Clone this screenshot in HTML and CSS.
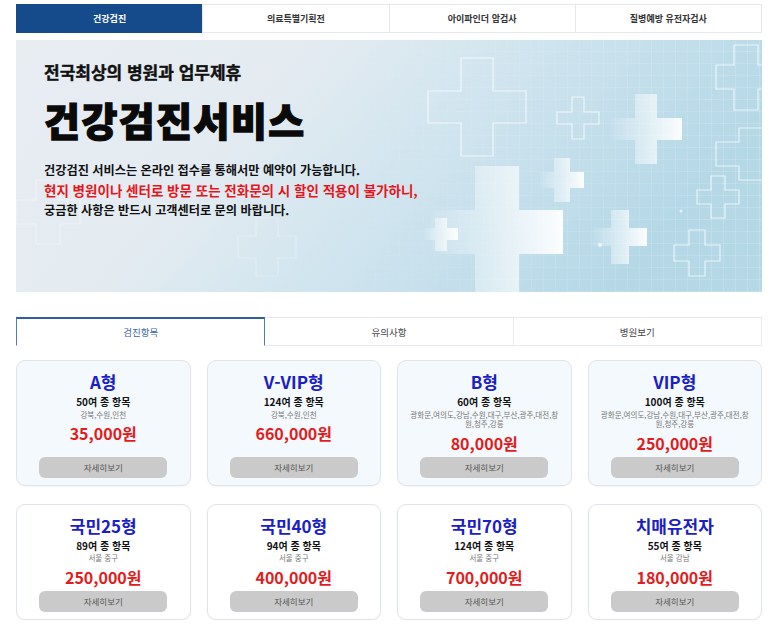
FILE: index.html
```html
<!DOCTYPE html>
<html lang="ko">
<head>
<meta charset="utf-8">
<title>건강검진서비스</title>
<link rel="stylesheet" href="styles.css">
</head>
<body>
<div class="page">
  <nav class="top-tabs">
    <a class="top-tab active">건강검진</a>
    <a class="top-tab">의료특별기획전</a>
    <a class="top-tab">아이파인더 암검사</a>
    <a class="top-tab">질병예방 유전자검사</a>
  </nav>

  <section class="hero">
    <svg class="hero-bg" width="746" height="252" viewBox="0 0 746 252" xmlns="http://www.w3.org/2000/svg" aria-hidden="true">
      <defs>
        <linearGradient id="base" x1="0" y1="0" x2="1" y2="0.3">
          <stop offset="0" stop-color="#e8edf2"/>
          <stop offset="0.38" stop-color="#e3ebf1"/>
          <stop offset="0.62" stop-color="#d1e5ef"/>
          <stop offset="1" stop-color="#b5d8e7"/>
        </linearGradient>
        <linearGradient id="fade" x1="0" y1="0" x2="1" y2="0">
          <stop offset="0" stop-color="#ffffff" stop-opacity="0.05"/>
          <stop offset="1" stop-color="#ffffff" stop-opacity="0.95"/>
        </linearGradient>
        <linearGradient id="gridmask" x1="0" y1="0" x2="1" y2="0">
          <stop offset="0.3" stop-color="#fff" stop-opacity="0"/>
          <stop offset="1" stop-color="#fff" stop-opacity="1"/>
        </linearGradient>
        <mask id="gm"><rect width="746" height="252" fill="url(#gridmask)"/></mask>
        <pattern id="grid" width="12" height="12" patternUnits="userSpaceOnUse">
          <path d="M12 0V12M0 12H12" stroke="#ffffff" stroke-opacity="0.3" stroke-width="1" fill="none"/>
        </pattern>
      </defs>
      <rect width="746" height="252" fill="url(#base)"/>
      <rect width="746" height="252" fill="url(#grid)" mask="url(#gm)"/>
      <g fill="none" stroke="#ffffff" stroke-opacity="0.7" stroke-width="1.2">
        <path d="M445 18H477V51H510V83H477V116H445V83H412V51H445Z"/>
        <path d="M556 57H568V72H583V84H568V99H556V84H541V72H556Z"/>
        <path d="M718 5H742V25H760V49H742V70H718V49H700V25H718Z"/>
        <path d="M723 88H747V102H770V126H747V140H723V126H700V102H723Z"/>
        <path d="M695 136H709V150H723V164H709V178H695V164H681V150H695Z"/>
        <path d="M673 190H689V205H704V221H689V236H673V221H658V205H673Z"/>
        <path d="M20 140H44V160H64V184H44V204H20V184H0V160H20Z" stroke-opacity="0.35"/>
        <path d="M240 178H262V196H280V218H262V236H240V218H222V196H240Z" stroke-opacity="0.3"/>
      </g>
      <g fill="url(#fade)">
        <path d="M459 126H503V170H547V214H503V258H459V214H415V170H459Z"/>
        <path d="M619 54H641V78H666V100H641V124H619V100H595V78H619Z"/>
        <path d="M538 118H554V132H568V148H554V162H538V148H524V132H538Z"/>
        <path d="M595 170H613V188H631V206H613V224H595V206H577V188H595Z"/>
        <path d="M419 178H431V188H442V200H431V211H419V200H408V188H419Z"/>
      </g>
      <circle cx="158" cy="78" r="2" fill="#fff" fill-opacity="0.7"/>
      <circle cx="584" cy="205" r="2" fill="#fff" fill-opacity="0.7"/>
      <circle cx="665" cy="171" r="1.5" fill="#fff" fill-opacity="0.7"/>
    </svg>
    <div class="hero-text">
      <p class="hero-kicker">전국최상의 병원과 업무제휴</p>
      <h1 class="hero-title">건강검진서비스</h1>
      <p class="hero-line">건강검진 서비스는 온라인 접수를 통해서만 예약이 가능합니다.</p>
      <p class="hero-line red">현지 병원이나 센터로 방문 또는 전화문의 시 할인 적용이 불가하니,</p>
      <p class="hero-line">궁금한 사항은 반드시 고객센터로 문의 바랍니다.</p>
    </div>
  </section>

  <nav class="sub-tabs">
    <a class="sub-tab active">검진항목</a>
    <a class="sub-tab">유의사항</a>
    <a class="sub-tab">병원보기</a>
  </nav>

  <div class="cards">
    <div class="card tinted">
      <h2 class="card-title">A형</h2>
      <p class="card-items">50여 종 항목</p>
      <p class="card-loc">강북,수원,인천</p>
      <p class="card-price">35,000원</p>
      <a class="card-btn">자세히보기</a>
    </div>
    <div class="card tinted">
      <h2 class="card-title">V-VIP형</h2>
      <p class="card-items">124여 종 항목</p>
      <p class="card-loc">강북,수원,인천</p>
      <p class="card-price">660,000원</p>
      <a class="card-btn">자세히보기</a>
    </div>
    <div class="card tinted">
      <h2 class="card-title">B형</h2>
      <p class="card-items">60여 종 항목</p>
      <p class="card-loc">광화문,여의도,강남,수원,대구,부산,광주,대전,창원,청주,강릉</p>
      <p class="card-price">80,000원</p>
      <a class="card-btn">자세히보기</a>
    </div>
    <div class="card tinted">
      <h2 class="card-title">VIP형</h2>
      <p class="card-items">100여 종 항목</p>
      <p class="card-loc">광화문,여의도,강남,수원,대구,부산,광주,대전,창원,청주,강릉</p>
      <p class="card-price">250,000원</p>
      <a class="card-btn">자세히보기</a>
    </div>
    <div class="card">
      <h2 class="card-title">국민25형</h2>
      <p class="card-items">89여 종 항목</p>
      <p class="card-loc">서울 중구</p>
      <p class="card-price">250,000원</p>
      <a class="card-btn">자세히보기</a>
    </div>
    <div class="card">
      <h2 class="card-title">국민40형</h2>
      <p class="card-items">94여 종 항목</p>
      <p class="card-loc">서울 중구</p>
      <p class="card-price">400,000원</p>
      <a class="card-btn">자세히보기</a>
    </div>
    <div class="card">
      <h2 class="card-title">국민70형</h2>
      <p class="card-items">124여 종 항목</p>
      <p class="card-loc">서울 중구</p>
      <p class="card-price">700,000원</p>
      <a class="card-btn">자세히보기</a>
    </div>
    <div class="card">
      <h2 class="card-title">치매유전자</h2>
      <p class="card-items">55여 종 항목</p>
      <p class="card-loc">서울 강남</p>
      <p class="card-price">180,000원</p>
      <a class="card-btn">자세히보기</a>
    </div>
  </div>
</div>
</body>
</html>
```

FILE: styles.css
```css
* {
  box-sizing: border-box;
}

html, body {
  margin: 0;
  padding: 0;
  background: #ffffff;
}

body {
  font-family: "Noto Sans CJK KR", "Noto Sans", sans-serif;
  color: #222;
}

.page {
  width: 746px;
  margin-left: 16px;
  padding-top: 4px;
}

/* top tabs */
.top-tabs {
  display: flex;
  height: 29px;
}

.top-tab {
  flex: 1;
  display: flex;
  align-items: center;
  justify-content: center;
  border: 1px solid #e4e7eb;
  margin-left: -1px;
  font-size: 9px;
  font-weight: 700;
  color: #333;
  background: #fff;
}

.top-tab:first-child {
  margin-left: 0;
}

.top-tab.active {
  background: #164b8b;
  border-color: #164b8b;
  color: #fff;
}

/* hero */
.hero {
  position: relative;
  height: 252px;
  margin-top: 7px;
  overflow: hidden;
}

.hero-bg {
  position: absolute;
  left: 0;
  top: 0;
  display: block;
}

.hero-text {
  position: relative;
  padding: 21px 0 0 28px;
}

.hero-kicker {
  margin: 0;
  font-size: 17px;
  line-height: 22px;
  font-weight: 700;
  color: #111;
  -webkit-text-stroke: 0.4px #111;
}

.hero-title {
  margin: 13px 0 0;
  font-size: 39px;
  line-height: 46px;
  font-weight: 900;
  color: #0a0a0a;
  letter-spacing: 1.5px;
  -webkit-text-stroke: 1.3px #0a0a0a;
}

.hero-line {
  margin: 0;
  font-size: 12.2px;
  line-height: 20px;
  font-weight: 700;
  color: #111;
}

.hero-title + .hero-line {
  margin-top: 18px;
}

.hero-line.red {
  font-size: 13.5px;
  color: #e8141b;
}

/* sub tabs */
.sub-tabs {
  display: flex;
  height: 29px;
  margin-top: 25px;
}

.sub-tab {
  flex: 1;
  display: flex;
  align-items: center;
  justify-content: center;
  border: 1px solid #e6e9ed;
  margin-left: -1px;
  font-size: 9.5px;
  color: #444;
  background: #fff;
}

.sub-tab:first-child {
  margin-left: 0;
}

.sub-tab.active {
  position: relative;
  border: 1px solid #4f7bb6;
  border-top: 2px solid #2f5f9f;
  border-bottom-color: #fff;
  color: #3a67a6;
}

/* cards */
.cards {
  display: grid;
  grid-template-columns: repeat(4, 1fr);
  column-gap: 16px;
  row-gap: 18px;
  margin-top: 14px;
}

.card {
  display: flex;
  flex-direction: column;
  align-items: center;
  text-align: center;
  padding: 10px 5px 7px;
  border: 1px solid #dfe4ea;
  border-radius: 9px;
  background: #fff;
  box-shadow: 0 1px 2px rgba(0, 0, 0, 0.04);
}

.card.tinted {
  background: #f3f9fd;
}

.card-title {
  margin: 0 0 2px;
  font-size: 17px;
  line-height: 22px;
  font-weight: 700;
  color: #1a20c6;
}

.card-items {
  margin: 0;
  font-size: 10px;
  line-height: 14.5px;
  font-weight: 700;
  color: #111;
}

.card-loc {
  margin: 0;
  padding: 0 4px;
  font-size: 7.5px;
  line-height: 9.5px;
  color: #777;
  word-break: break-all;
}

.card-price {
  margin: 4px 0 4px;
  font-size: 16px;
  line-height: 20px;
  font-weight: 700;
  color: #e21c1c;
}

.card-btn {
  margin-top: auto;
  width: 128px;
  height: 21px;
  line-height: 21px;
  border-radius: 6px;
  background: #cacaca;
  font-size: 8.5px;
  color: #555;
}
```
